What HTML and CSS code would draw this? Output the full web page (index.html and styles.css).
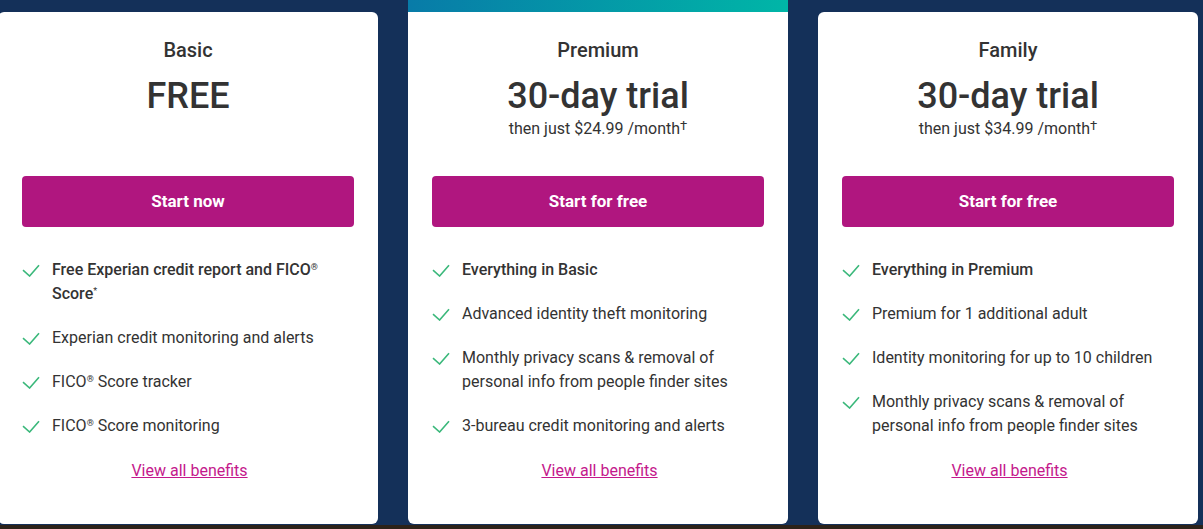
FILE: index.html
```html
<!DOCTYPE html>
<html lang="en">
<head>
  <meta charset="UTF-8">
  <meta name="viewport" content="width=device-width, initial-scale=1.0">
  <title>Plans</title>
  <link rel="stylesheet" href="styles.css">
</head>
<body>

  <div class="plans">
    <div class="plan">
      <div class="card">
        <div class="plan-head">
          <h3 class="plan-name">Basic</h3>
          <div class="plan-price">FREE</div>
        </div>
        <a class="btn" href="#">Start now</a>
        <ul class="benefits">
          <li class="strong">Free Experian credit report and FICO<sup>®</sup> Score<sup>*</sup></li>
          <li>Experian credit monitoring and alerts</li>
          <li>FICO<sup>®</sup> Score tracker</li>
          <li>FICO<sup>®</sup> Score monitoring</li>
        </ul>
        <a class="more" href="#">View all benefits</a>
      </div>
    </div>

    <div class="plan featured">
      <div class="plan-bar"></div>
      <div class="card">
        <div class="plan-head">
          <h3 class="plan-name">Premium</h3>
          <div class="plan-price">30-day trial</div>
          <p class="plan-note">then just $24.99 /month<sup>†</sup></p>
        </div>
        <a class="btn" href="#">Start for free</a>
        <ul class="benefits">
          <li class="strong">Everything in Basic</li>
          <li>Advanced identity theft monitoring</li>
          <li>Monthly privacy scans &amp; removal of personal info from people finder sites</li>
          <li>3-bureau credit monitoring and alerts</li>
        </ul>
        <a class="more" href="#">View all benefits</a>
      </div>
    </div>

    <div class="plan">
      <div class="card">
        <div class="plan-head">
          <h3 class="plan-name">Family</h3>
          <div class="plan-price">30-day trial</div>
          <p class="plan-note">then just $34.99 /month<sup>†</sup></p>
        </div>
        <a class="btn" href="#">Start for free</a>
        <ul class="benefits">
          <li class="strong">Everything in Premium</li>
          <li>Premium for 1 additional adult</li>
          <li>Identity monitoring for up to 10 children</li>
          <li>Monthly privacy scans &amp; removal of personal info from people finder sites</li>
        </ul>
        <a class="more" href="#">View all benefits</a>
      </div>
    </div>
  </div>

  <div class="bottom-strip"></div>

</body>
</html>
```

FILE: styles.css
```css
body {
  font-family: Roboto, "Liberation Sans", Arial, sans-serif;
  background-color: #143059;
  color: #333;
  margin: 0;
  padding: 0;
  height: 529px;
  overflow: hidden;
  display: flex;
  flex-direction: column;
}

.plans {
  display: flex;
  gap: 30px;
  height: 525px;
  margin-left: -2px;
}

.plan {
  width: 380px;
  display: flex;
  flex-direction: column;
  padding-top: 12px;
  box-sizing: border-box;
  height: 524px;
}

.plan.featured {
  padding-top: 0;
}

.plan-bar {
  height: 12px;
  background: linear-gradient(90deg, #087ba8, #00b6a7);
}

.card {
  flex: 1;
  background-color: #fff;
  border-radius: 6px;
  padding: 24px 24px 0;
  display: flex;
  flex-direction: column;
}

.featured .card {
  border-top-left-radius: 0;
  border-top-right-radius: 0;
}

.plan-head {
  height: 116px;
  text-align: center;
}

.plan-name {
  margin: 0;
  font-size: 20px;
  line-height: 28px;
  font-weight: 500;
}

.plan-price {
  margin-top: 10px;
  font-size: 36px;
  line-height: 44px;
  font-weight: 500;
}

.plan-note {
  margin: 0;
  font-size: 16px;
  line-height: 22px;
}

.plan-note sup {
  font-size: 13px;
  vertical-align: 4px;
  line-height: 0;
}

.btn {
  margin-top: 24px;
  height: 51px;
  padding-bottom: 1px;
  box-sizing: border-box;
  display: flex;
  align-items: center;
  justify-content: center;
  background-color: #b0167f;
  color: #fff;
  font-size: 17px;
  font-weight: 700;
  text-decoration: none;
  border-radius: 4px;
}

.benefits {
  list-style: none;
  margin: 31px 0 0;
  padding: 0;
  display: flex;
  flex-direction: column;
  gap: 20px;
}

.benefits li {
  padding-left: 30px;
  font-size: 16px;
  line-height: 24px;
  background: url("data:image/svg+xml,%3Csvg xmlns='http://www.w3.org/2000/svg' width='18' height='13' viewBox='0 0 18 13'%3E%3Cpath d='M1 6.2 L7.6 12 L17 1.2' fill='none' stroke='%233bb87b' stroke-width='1.6'/%3E%3C/svg%3E") no-repeat 0 6px;
}

.benefits li.strong {
  font-weight: 500;
}

.benefits sup {
  font-size: 9px;
  vertical-align: 5px;
  line-height: 0;
  font-weight: 400;
}

.more {
  margin-top: 21px;
  padding-left: 3px;
  text-align: center;
  font-size: 16px;
  line-height: 24px;
  color: #c4198c;
}

.bottom-strip {
  height: 4px;
  background-color: #2c2219;
}
```
